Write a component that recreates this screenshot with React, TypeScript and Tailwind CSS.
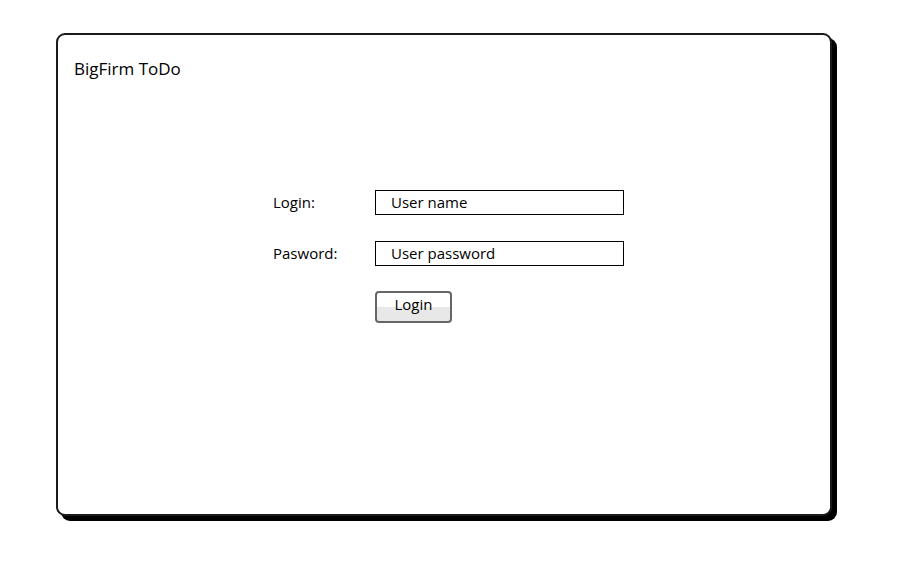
export default function App() {
  return (
    <main
      className="h-[575px] w-[897px] bg-white pl-[56px] pt-[33px] text-black"
      style={{ fontFamily: '"Open Sans", "Noto Sans", sans-serif' }}
    >
      <div className="h-[483px] w-[776px] rounded-[9px] border-2 border-[#1a1a1a] bg-white px-[16px] pt-[21px] shadow-[5px_5px_0_0_#000]">
        <h1 className="text-[17px] leading-[26px]">BigFirm ToDo</h1>

        <div className="ml-[199px] mt-[108px] flex flex-col">
          <div className="flex items-center">
            <label className="w-[102px] pb-[1px] text-[15px]">Login:</label>
            <div className="flex h-[25px] w-[249px] items-center border border-black pb-[1px] pl-[15px] text-[15px]">
              User name
            </div>
          </div>
          <div className="mt-[26px] flex items-center">
            <label className="w-[102px] pb-[1px] text-[15px]">Pasword:</label>
            <div className="flex h-[25px] w-[249px] items-center border border-black pb-[1px] pl-[15px] text-[15px]">
              User password
            </div>
          </div>
          <div className="ml-[102px] mt-[25px]">
            <button className="h-[32px] w-[77px] rounded-[4px] border-2 border-[#666] bg-[linear-gradient(to_bottom,#ffffff_0%,#ffffff_50%,#e8e8e8_50%,#e8e8e8_100%)] pb-[5px] text-[15px]">
              Login
            </button>
          </div>
        </div>
      </div>
    </main>
  );
}
